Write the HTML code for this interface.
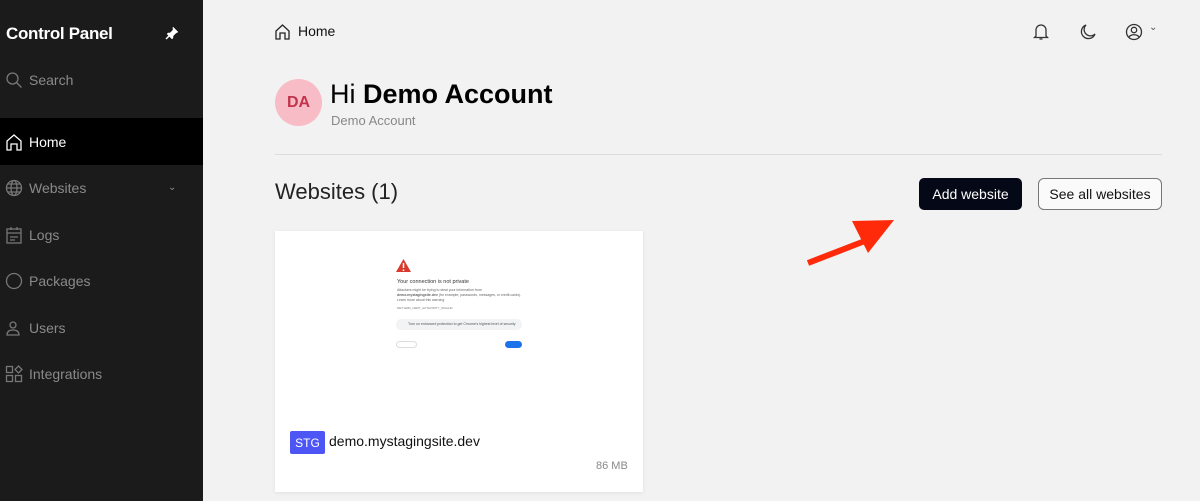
<!DOCTYPE html>
<html><head><meta charset="utf-8"><style>
*{margin:0;padding:0;box-sizing:border-box}
body{width:1200px;height:501px;overflow:hidden;background:#f2f2f2;font-family:"Liberation Sans",sans-serif;position:relative}
.sb{position:absolute;left:0;top:0;width:203px;height:501px;background:#1b1b1b}
.t{position:absolute;font-size:16px;white-space:nowrap}
.nav{position:absolute;left:0;width:203px;height:47px;display:flex;align-items:center;color:#8a8a8a;font-size:14px}
.nav svg{position:absolute;left:5px}
.nav span{position:absolute;left:29px}
svg{fill:none;stroke-width:1.3}
.btn{position:absolute;height:32px;border-radius:5px;font-size:14px;display:flex;align-items:center;justify-content:center}
</style></head><body>
<div class="sb">
<div class="t" style="left:6px;top:24px;color:#fff;font-weight:bold;font-size:17px;letter-spacing:-0.3px">Control Panel</div>
<svg style="position:absolute;left:165px;top:26px" width="14" height="14"><path d="M8 1l5 5-2 1-3 3 0 2-1 1-5-5 1-1 2 0 3-3z" fill="#fff" stroke="#fff" stroke-width="0.5"/><path d="M4 10L1 13" stroke="#fff" stroke-width="1.5"/></svg>
<div class="nav" style="top:56px"><svg width="18" height="18" stroke="#777"><circle cx="7.5" cy="7.5" r="5.5"/><path d="M11.5 11.5l5 5"/></svg><span>Search</span></div>
<div class="nav" style="top:118px;background:#000;color:#fff"><svg width="18" height="18" stroke="#fff"><path d="M2 17V8l7-6 7 6v9h-4v-6H6v6z"/></svg><span>Home</span></div>
<div class="nav" style="top:164px"><svg width="18" height="18" stroke="#777"><circle cx="9" cy="9" r="7.5"/><ellipse cx="9" cy="9" rx="3" ry="7.5"/><path d="M1.5 9h15M3 5h12M3 13h12"/></svg><span>Websites</span><span style="left:168px;font-size:10px">⌄</span></div>
<div class="nav" style="top:211px"><svg width="18" height="18" stroke="#777"><rect x="2" y="3" width="14" height="14"/><path d="M2 7h14M6 1v3M12 1v3M5 11h8M5 14h5"/></svg><span>Logs</span></div>
<div class="nav" style="top:257px"><svg width="18" height="18" stroke="#777"><circle cx="9" cy="9" r="7.5"/></svg><span>Packages</span></div>
<div class="nav" style="top:304px"><svg width="18" height="18" stroke="#777"><circle cx="8" cy="6" r="3"/><path d="M2 16c0-4 3-5 6-5s6 1 6 5z"/></svg><span>Users</span></div>
<div class="nav" style="top:350px"><svg width="18" height="18" stroke="#777"><rect x="1.5" y="1.5" width="6" height="6"/><rect x="1.5" y="10.5" width="6" height="6"/><rect x="10.5" y="10.5" width="6" height="6"/><path d="M13.5 1l3.5 3.5-3.5 3.5-3.5-3.5z"/></svg><span>Integrations</span></div>
</div>
<svg style="position:absolute;left:274px;top:23px" width="17" height="17" stroke="#222"><path d="M2 16V8l6.5-6 6.5 6v8h-4v-6H6v6z"/></svg>
<div class="t" style="left:298px;top:23px;font-size:14px;color:#111">Home</div>
<svg style="position:absolute;left:1033px;top:23px" width="16" height="18" stroke="#333"><path d="M3 13V7a5 5 0 0110 0v6l1.5 1.5h-13zM6.5 16h3"/></svg>
<svg style="position:absolute;left:1079px;top:23px" width="18" height="18" stroke="#333"><path d="M7 2a7 7 0 109 9A6 6 0 017 2z"/></svg>
<svg style="position:absolute;left:1125px;top:23px" width="18" height="18" stroke="#333"><circle cx="9" cy="9" r="7.5"/><circle cx="9" cy="7" r="2.7"/><path d="M4 14c2-3 8-3 10 0"/></svg>
<div class="t" style="left:1149px;top:22px;font-size:10px;color:#555">⌄</div>
<div style="position:absolute;left:275px;top:79px;width:47px;height:47px;border-radius:50%;background:#f8bcc7;color:#c2334d;font-weight:bold;font-size:16px;display:flex;align-items:center;justify-content:center">DA</div>
<div class="t" style="left:330px;top:79px;font-size:27px;color:#000">Hi <b>Demo Account</b></div>
<div class="t" style="left:331px;top:113px;font-size:13px;color:#888">Demo Account</div>
<div style="position:absolute;left:275px;top:154px;width:887px;height:1px;background:#ddd"></div>
<div class="t" style="left:275px;top:179px;font-size:22px;color:#222">Websites (1)</div>
<div class="btn" style="left:919px;top:178px;width:103px;background:#050816;color:#fff">Add website</div>
<div class="btn" style="left:1038px;top:178px;width:124px;border:1px solid #777;border-radius:6px;background:#fafafa;color:#111">See all websites</div>
<svg style="position:absolute;left:800px;top:215px" width="100" height="55"><path d="M8 48L70 24" stroke="#ff2a0a" stroke-width="6"/><path d="M52 6L94 5 68 38z" fill="#ff2a0a" stroke="none"/></svg>
<div style="position:absolute;left:275px;top:231px;width:368px;height:261px;background:#fff;box-shadow:0 1px 4px rgba(0,0,0,.08)">
<svg style="position:absolute;left:121px;top:28px" width="15" height="13"><path d="M7.5 0L15 13H0z" fill="#d93a2e" stroke="none"/><path d="M7.5 4v5M7.5 10.5v1.5" stroke="#fff" stroke-width="1.5"/></svg>
<div class="t" style="left:122px;top:48px;font-size:5.5px;color:#333">Your connection is not private</div>
<div style="position:absolute;left:122px;top:57px;width:125px;font-size:3.5px;line-height:5px;color:#666">Attackers might be trying to steal your information from <b>demo.mystagingsite.dev</b> (for example, passwords, messages, or credit cards). Learn more about this warning</div>
<div class="t" style="left:122px;top:75px;font-size:3px;color:#777">NET::ERR_CERT_AUTHORITY_INVALID</div>
<div style="position:absolute;left:121px;top:88px;width:126px;height:11px;border-radius:5px;background:#f1f3f4;font-size:3.5px;color:#555;padding:3px 0 0 12px">Turn on enhanced protection to get Chrome's highest level of security</div>
<div style="position:absolute;left:121px;top:110px;width:21px;height:7px;border:1px solid #ddd;border-radius:4px"></div>
<div style="position:absolute;left:230px;top:110px;width:17px;height:7px;background:#1a73e8;border-radius:4px"></div>
<div style="position:absolute;left:15px;top:200px;width:35px;height:23px;background:#4d55f5;border-radius:2px;color:#fff;font-size:12px;display:flex;align-items:center;justify-content:center">STG</div>
<div class="t" style="left:54px;top:202px;font-size:14px;color:#111">demo.mystagingsite.dev</div>
<div class="t" style="left:321px;top:229px;font-size:11px;color:#888">86 MB</div>
</div>
</body></html>
